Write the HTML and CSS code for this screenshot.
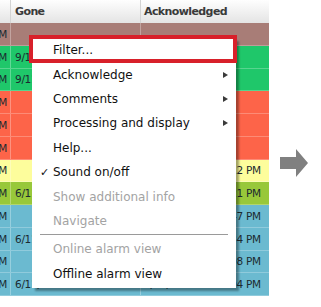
FILE: index.html
```html
<!DOCTYPE html>
<html lang="en">
<head>
  <meta charset="UTF-8">
  <title>Alarm list - context menu</title>
  <link rel="stylesheet" href="styles.css">
</head>
<body>
  <div class="screen">
    <div class="grid">
      <div class="row head">
        <div class="c c1"></div>
        <div class="c c2">Gone</div>
        <div class="c c3">Acknowledged</div>
      </div>
      <div class="row brown">
        <div class="c c1"><span>11:09:58 PM</span></div>
        <div class="c c2"></div>
        <div class="c c3"></div>
      </div>
      <div class="row green">
        <div class="c c1"><span>11:10:01 PM</span></div>
        <div class="c c2">9/11/2012 11:10:02 PM</div>
        <div class="c c3"></div>
      </div>
      <div class="row green">
        <div class="c c1"><span>11:10:02 PM</span></div>
        <div class="c c2">9/11/2012 11:10:03 PM</div>
        <div class="c c3"></div>
      </div>
      <div class="row red">
        <div class="c c1"><span>11:10:03 PM</span></div>
        <div class="c c2"></div>
        <div class="c c3"></div>
      </div>
      <div class="row red">
        <div class="c c1"><span>11:10:04 PM</span></div>
        <div class="c c2"></div>
        <div class="c c3"></div>
      </div>
      <div class="row red">
        <div class="c c1"><span>11:10:05 PM</span></div>
        <div class="c c2"></div>
        <div class="c c3"></div>
      </div>
      <div class="row yellow">
        <div class="c c1"><span>11:10:06 PM</span></div>
        <div class="c c2"></div>
        <div class="c c3">6/11/2012 11:10:12 PM</div>
      </div>
      <div class="row lime">
        <div class="c c1"><span>11:10:07 PM</span></div>
        <div class="c c2">6/11/2012 11:10:15 PM</div>
        <div class="c c3">6/11/2012 11:10:21 PM</div>
      </div>
      <div class="row blue">
        <div class="c c1"><span>11:10:08 PM</span></div>
        <div class="c c2"></div>
        <div class="c c3">6/11/2012 11:10:47 PM</div>
      </div>
      <div class="row blue">
        <div class="c c1"><span>11:10:09 PM</span></div>
        <div class="c c2">6/11/2012 11:10:30 PM</div>
        <div class="c c3">6/11/2012 11:10:34 PM</div>
      </div>
      <div class="row blue">
        <div class="c c1"><span>11:10:10 PM</span></div>
        <div class="c c2"></div>
        <div class="c c3">6/11/2012 11:11:08 PM</div>
      </div>
      <div class="row blue">
        <div class="c c1"><span>11:10:11 PM</span></div>
        <div class="c c2">6/11/2012 11:10:08 PM</div>
        <div class="c c3">6/11/2012 11:10:04 PM</div>
      </div>
    </div>

    <div class="next-arrow">
      <svg width="28" height="28" viewBox="0 0 28 28">
        <polygon points="0,8 16,8 16,0 28,14 16,28 16,20 0,20" fill="#808080"/>
      </svg>
    </div>

    <!-- context menu over the list -->
    <div class="menu">
      <div class="item"><span class="mark"></span>Filter...</div>
      <div class="item"><span class="mark"></span>Acknowledge<span class="sub"></span></div>
      <div class="item"><span class="mark"></span>Comments<span class="sub"></span></div>
      <div class="item"><span class="mark"></span>Processing and display<span class="sub"></span></div>
      <div class="item"><span class="mark"></span>Help...</div>
      <div class="item"><span class="mark">✓</span>Sound on/off</div>
      <div class="item off"><span class="mark"></span>Show additional info</div>
      <div class="item off"><span class="mark"></span>Navigate</div>
      <div class="sep"></div>
      <div class="item off"><span class="mark"></span>Online alarm view</div>
      <div class="item"><span class="mark"></span>Offline alarm view</div>
    </div>
    <div class="focus"></div>
  </div>
</body>
</html>
```

FILE: styles.css
```css
body {
  margin: 0;
  background: #fff;
  font-family: "DejaVu Sans", Verdana, sans-serif;
}
.screen {
  position: relative;
  display: flex;
  align-items: flex-start;
  width: 321px;
  height: 307px;
  overflow: hidden;
}

/* alarm list */
.grid {
  width: 269px;
  flex: none;
}
.row {
  display: flex;
  height: 22.75px;
  border-bottom: 1px solid rgba(255, 255, 255, 0.25);
  box-sizing: border-box;
  font-size: 10.5px;
  letter-spacing: -0.3px;
  color: #1c2a30;
}
.row.head {
  height: 23px;
  background: linear-gradient(#fefefe, #e4e4e4);
  border-bottom: none;
  font-weight: bold;
  font-size: 11px;
  letter-spacing: -0.6px;
  color: #3a3a3a;
}
.c {
  display: flex;
  align-items: center;
  box-sizing: border-box;
  overflow: hidden;
  white-space: nowrap;
  border-right: 1px solid rgba(255, 255, 255, 0.3);
}
.head .c {
  border-right: 1px solid #d4d4d4;
}
.c1 {
  width: 11px;
  padding-right: 3px;
  justify-content: flex-end;
}
.c1 span {
  flex: none;
}
.c2 {
  width: 130px;
  padding-left: 4px;
}
.c3 {
  width: 128px;
  padding-left: 3px;
  border-right: none;
}
.head .c3 {
  border-right: none;
}
.brown { background: #a87d77; }
.green { background: #1fc76a; }
.red { background: #fd6449; }
.yellow { background: #fdfd9c; }
.lime { background: #98c83a; }
.blue { background: #6bbad0; }

.next-arrow {
  margin: 149px 0 0 11px;
  height: 28px;
}

/* context menu */
.menu {
  position: absolute;
  left: 32px;
  top: 38px;
  width: 204px;
  padding-bottom: 2px;
  background: #fff;
  box-shadow: 3px 3px 2px rgba(0, 0, 0, 0.35);
  font-size: 12px;
  color: #111;
}
.item {
  display: flex;
  align-items: center;
  height: 24.4px;
  padding-left: 8px;
}
.item.off {
  color: #a3a3a3;
}
.mark {
  width: 13px;
  flex: none;
  font-size: 11px;
}
.sub {
  margin-left: auto;
  margin-right: 8px;
  width: 0;
  height: 0;
  border-left: 5px solid #3a3a3a;
  border-top: 3.5px solid transparent;
  border-bottom: 3.5px solid transparent;
}
.sep {
  height: 1px;
  margin: 1px 8px 2px 8px;
  background: #9a9a9a;
}
.focus {
  position: absolute;
  left: 29px;
  top: 35px;
  width: 208px;
  height: 28px;
  box-sizing: border-box;
  border: 4px solid #d8202a;
}
```
